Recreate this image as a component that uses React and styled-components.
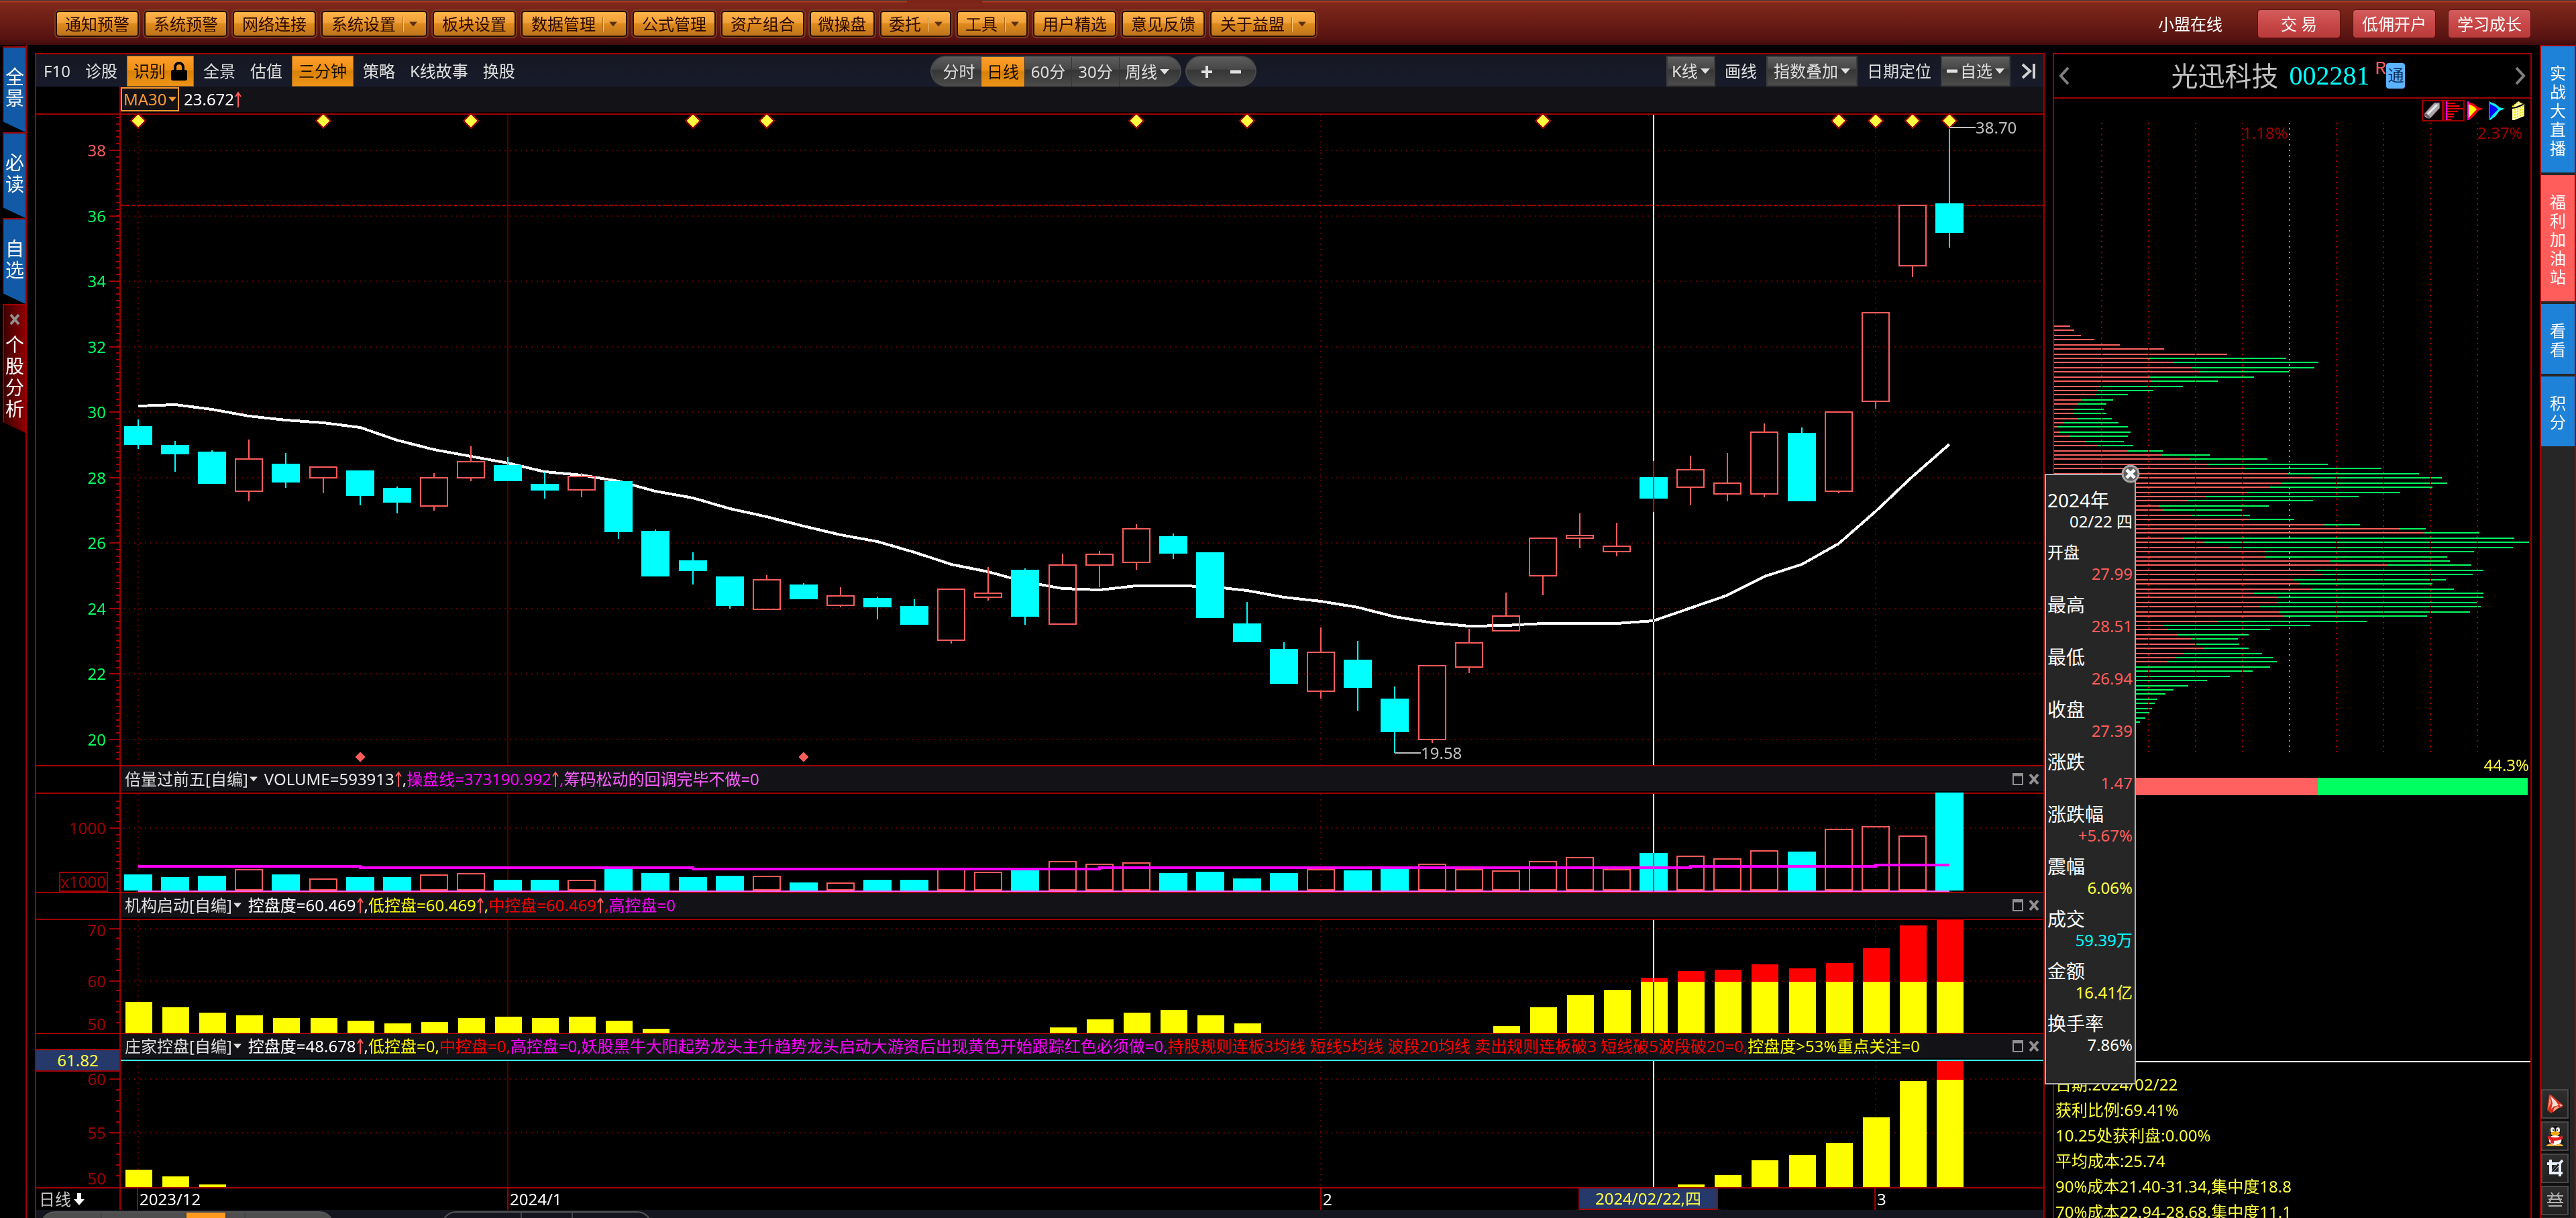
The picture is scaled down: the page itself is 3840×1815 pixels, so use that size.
import { Fragment, useState } from "react";
import styled, { createGlobalStyle } from "styled-components";

const GlobalStyle = createGlobalStyle`
  * {
    box-sizing: border-box;
  }
  body {
    margin: 0;
    background: #000;
    color: #e0e0e0;
    font-family: "Noto Sans", "Noto Sans CJK SC", sans-serif;
    font-size: 24px;
    line-height: 30px;
    overflow: hidden;
  }
  button, select {
    margin: 0;
    padding: 0;
    border: 0;
    background: none;
    color: inherit;
    font: inherit;
    white-space: nowrap;
    cursor: pointer;
  }
  svg {
    display: block;
    flex: none;
  }
`;

const LINE = "#a00000";
const GRID = "#600000";
const UP = "#ff5c5c";
const CYAN = "#00ffff";
const YELLOW = "#ffff40";

const Page = styled.div`
  display: flex;
  flex-direction: column;
  height: 100vh;
`;

/* ---------- top bar ---------- */

const TopBar = styled.header`
  position: relative;
  display: flex;
  flex: none;
  align-items: center;
  justify-content: space-between;
  height: 67px;
  padding: 3px 67px 0 83px;
  border-top: 1px solid #3a3a3a;
  background: linear-gradient(#a8381f 0 2px, #80271b 3px, #6a1d15 50%, #551111 88%, #3e0d0d);
`;

const ActiveNotch = styled.div`
  position: absolute;
  top: -1px;
  left: 1352px;
  width: 112px;
  height: 5px;
  background: #7c2418;
`;

const MenuList = styled.nav`
  display: flex;
  gap: 8px;
`;

const MenuButton = styled.button`
  display: flex;
  align-items: center;
  justify-content: center;
  gap: 10px;
  width: ${(props) => props.$width}px;
  height: 39px;
  border: 2px solid #2a0f04;
  border-radius: 5px;
  background: linear-gradient(#ffb347, #f0a03a 45%, #df8a1c 50%, #bd741c);
  box-shadow: 0 0 0 2px #7c3a20;
  color: #2a0800;
`;

const MenuDivider = styled.i`
  width: 2px;
  height: 22px;
  margin-right: -2px;
  background: #ffc873;
  border-left: 1px solid #b06a1a;
`;

const Account = styled.div`
  display: flex;
  align-items: center;
  gap: 18px;
  color: #fff;
`;

const OnlineLink = styled.a`
  margin-right: 34px;
  color: #fff;
  text-decoration: none;
`;

const RedButton = styled.button`
  width: 124px;
  height: 43px;
  border: 1px solid #5a1212;
  border-radius: 5px;
  background: linear-gradient(#d45c5c, #c84848 50%, #b83a3a);
  white-space: pre;
`;

/* ---------- side rails ---------- */

const Body = styled.div`
  display: flex;
  flex: 1;
  gap: 12px;
  min-height: 0;
`;

const LeftRail = styled.nav`
  flex: none;
  width: 40px;
  padding: 2px 0 0 4px;
  border-right: 2px solid ${LINE};
`;

const LeftTab = styled.button`
  display: flex;
  flex-direction: column;
  align-items: center;
  justify-content: center;
  width: 34px;
  height: ${(props) => (props.$active ? 192 : 128)}px;
  padding-bottom: 8px;
  border: 2px solid ${LINE};
  border-right: 0;
  border-bottom: 0;
  background: ${(props) =>
    props.$active ? "linear-gradient(90deg, #400000, #8c0000)" : "#125aa5"};
  clip-path: polygon(0 0, 100% 0, 100% 100%, 0 calc(100% - 16px));
  color: #fff;
  font-size: 28px;
  line-height: 32px;
`;

const TabClose = styled.svg`
  margin-bottom: 12px;
`;

const RightRail = styled.nav`
  display: flex;
  flex: none;
  flex-direction: column;
  gap: 4px;
  width: 54px;
  border: 2px solid ${LINE};
  border-bottom: 0;
  background: #262626;
`;

const RightTab = styled.button`
  display: flex;
  flex: none;
  flex-direction: column;
  align-items: center;
  justify-content: center;
  height: ${(props) => (props.$tall ? 188 : 104)}px;
  padding-top: 4px;
  background: ${(props) => (props.$hot ? UP : "#1e82d8")};
  color: #fff;
  line-height: 28px;
`;

const RailTools = styled.div`
  display: flex;
  flex-direction: column;
  gap: 4px;
  height: 192px;
  margin-top: auto;
  overflow: hidden;
`;

const RailTool = styled.button`
  display: flex;
  flex: none;
  align-items: center;
  justify-content: center;
  width: 41px;
  height: 44px;
  border: 2px solid #484848;
  background: linear-gradient(#2e2e2e, #202020);
  box-shadow: 0 0 0 2px #101010;
`;

/* ---------- chart panel ---------- */

const ChartPanel = styled.main`
  display: flex;
  flex: 1;
  flex-direction: column;
  min-width: 0;
  border: 2px solid ${LINE};
  border-bottom: 0;
  margin-top: 12px;
`;

const Toolbar = styled.div`
  display: grid;
  grid-template-columns: 1333px 1fr auto;
  flex: none;
  height: 48px;
  padding-top: 2px;
  background: linear-gradient(#161822, #181b2b);
`;

const ToolGroup = styled.div`
  display: flex;
  align-items: stretch;
  gap: ${(props) => props.$gap || 0}px;
`;

const ToolButton = styled.button`
  display: flex;
  align-items: center;
  gap: 8px;
  padding: 0 11px;
  ${(props) =>
    props.$active &&
    `
    margin: 0 3px;
    padding: 0 9px;
    border: 1px solid #9a6a2a;
    background: linear-gradient(#ff9e2c, #f09014 45%, #d88108 50%, #ef9418);
    color: #140a00;
  `}
`;

const Pill = styled.div`
  display: flex;
  margin-right: 6px;
  padding: 0 8px;
  border: 2px solid #4a4a4a;
  border-bottom: 0;
  border-radius: 26px;
  background: linear-gradient(#5c5c5c, #484848 40%, #363636 45%, #4c4c4c);
  overflow: hidden;
`;

const PillButton = styled.button`
  display: flex;
  align-items: center;
  justify-content: center;
  width: ${(props) => props.$width}px;
  border-right: ${(props) => (props.$plain ? 0 : 1)}px solid #363636;
  ${(props) =>
    props.$active &&
    `
    background: linear-gradient(#ff9e2c, #f09014 45%, #d88108 50%, #ef9418);
    color: #140a00;
  `}
`;

const PickLabel = styled.label`
  display: flex;
  align-items: center;
  gap: 4px;
  padding: 0 ${(props) => props.$pad || 6}px;
  ${(props) =>
    props.$boxed &&
    `
    border: 2px solid #3c3c3c;
    background: linear-gradient(#5c5c5c, #484848 40%, #363636 45%, #4c4c4c);
  `}
  select {
    appearance: none;
  }
`;

const IndicatorRow = styled.div`
  display: grid;
  grid-template-columns: 126px 1fr;
  flex: none;
  height: ${(props) => props.$height}px;
  border-bottom: 2px solid ${(props) => props.$line || LINE};
`;

const AxisCell = styled.div`
  border-right: 2px solid ${LINE};
`;

const IndicatorBar = styled.div`
  display: flex;
  align-items: center;
  margin-bottom: 2px;
  padding-left: ${(props) => (props.$flush ? 0 : 6)}px;
  background: #121217;
  white-space: nowrap;
`;

const MaLabel = styled(PickLabel)`
  height: 36px;
  margin-right: 7px;
  border: 2px solid #ff9a2e;
  color: #ff9a2e;
  gap: 2px;
  padding: 0 2px;
`;

const NameButton = styled.button`
  display: flex;
  align-items: center;
  gap: 2px;
  margin-right: 10px;
`;

const Reading = styled.span`
  display: flex;
  align-items: center;
  color: ${(props) => props.$color};
  white-space: pre;
`;

const WindowButtons = styled.div`
  display: flex;
  gap: 8px;
  margin-left: auto;
  padding-right: 6px;
`;

const Pane = styled.section`
  position: relative;
  flex: none;
  border-bottom: 2px solid ${LINE};
  svg {
    width: 100%;
    overflow: visible;
  }
`;

const LevelTag = styled.div`
  position: absolute;
  top: -18px;
  left: 0;
  width: 126px;
  height: 34px;
  border: 2px solid ${LINE};
  border-left: 0;
  background: #25396a;
  color: ${YELLOW};
  text-align: center;
`;

const DateRow = styled.div`
  position: relative;
  display: grid;
  grid-template-columns: 126px 26px 552px 1212px 826px 1fr;
  flex: none;
  height: 32px;
  color: #fff;
`;

const DateCell = styled.div`
  display: flex;
  align-items: center;
  padding-left: 2px;
  border-right: ${(props) => (props.$last ? 0 : 2)}px solid ${LINE};
`;

const PeriodButton = styled.button`
  display: flex;
  align-items: center;
  padding-left: 4px;
  border-right: 2px solid ${LINE};
  color: #c8c8c8;
`;

const DateTag = styled.div`
  position: absolute;
  top: 0;
  left: 2299px;
  width: 208px;
  height: 32px;
  border: 2px solid ${LINE};
  border-top: 0;
  background: #25396a;
  color: ${YELLOW};
  text-align: center;
`;

const BottomStrip = styled.div`
  display: flex;
  flex: 1;
  align-items: flex-start;
  gap: 160px;
  min-height: 0;
  padding: 2px 6px 0;
  background: #15151f;
  overflow: hidden;
`;

const StripPill = styled.div`
  display: grid;
  grid-template-columns: ${(props) => props.$columns};
  flex: none;
  height: 44px;
  border: 2px solid #565656;
  border-radius: 24px;
  background: ${(props) => (props.$filled ? "#4e4e4e" : "none")};
  overflow: hidden;
`;

const StripCell = styled.i`
  border-right: 2px solid #444;
  background: ${(props) => (props.$active ? "#ff9a1e" : "none")};
`;

/* ---------- stock panel ---------- */

const StockPanel = styled.aside`
  position: relative;
  flex: none;
  width: 714px;
  margin-top: 12px;
  border: 2px solid ${LINE};
  border-bottom: 0;
`;

const StockHeader = styled.div`
  display: flex;
  align-items: center;
  justify-content: space-between;
  height: 66px;
  padding: 0 5px;
  border-bottom: 2px solid ${LINE};
`;

const StockTitle = styled.h1`
  display: flex;
  align-items: center;
  margin: 0 12px 0 0;
  color: #c0c0c0;
  font-size: 40px;
  font-weight: 400;
  line-height: 50px;
`;

const StockCode = styled.span`
  margin: 0 8px 0 16px;
  color: ${CYAN};
  font-family: "Liberation Serif", serif;
`;

const MarginMark = styled.sup`
  align-self: flex-start;
  color: ${UP};
  font-family: "Liberation Mono", monospace;
  font-size: 28px;
  line-height: 30px;
`;

const ConnectBadge = styled.span`
  height: 38px;
  padding: 0 2px;
  border-radius: 4px;
  background: #5cb3ff;
  color: #0a2a50;
  font-size: 24px;
  line-height: 36px;
`;

const ProfileTools = styled.div`
  display: flex;
  justify-content: flex-end;
  height: 36px;
  padding: 2px 2px 0 0;
`;

const ProfileTool = styled.button`
  display: flex;
  align-items: center;
  justify-content: center;
  width: 32px;
  height: 32px;
  border: 2px solid ${(props) => (props.$boxed ? LINE : "transparent")};
`;

const ProfileChart = styled.svg`
  width: 100%;
`;

const RatioText = styled.div`
  height: 38px;
  padding-right: 2px;
  color: ${YELLOW};
  line-height: 38px;
  text-align: right;
`;

const RatioBar = styled.div`
  height: 26px;
  margin-right: 4px;
  background: #00ff60;
`;

const RatioFill = styled.div`
  height: 100%;
  background: #ff6060;
`;

const CostList = styled.ul`
  margin: 396px 0 0;
  padding: 14px 0 0 2px;
  border-top: 2px solid #fff;
  color: ${YELLOW};
  line-height: 38px;
  list-style: none;
`;

const Popup = styled.section`
  position: absolute;
  top: 625px;
  left: -14px;
  width: 136px;
  height: 910px;
  padding: 20px 3px 0 2px;
  border: 2px solid #b0b0b0;
  background: #262626;
  color: #fff;
`;

const PopupClose = styled.button`
  position: absolute;
  top: -16px;
  right: -8px;
`;

const Quote = styled.dl`
  margin: 0 0 14px;
`;

const QuoteLabel = styled.dt`
  font-size: ${(props) => (props.$small ? 24 : 28)}px;
  line-height: 34px;
`;

const QuoteValue = styled.dd`
  margin: 0;
  color: ${(props) => props.$color};
  line-height: 30px;
  text-align: right;
  white-space: nowrap;
`;

/* ---------- data ---------- */

const menus = [
  ["通知预警", 124],
  ["系统预警", 124],
  ["网络连接", 124],
  ["系统设置", 158, true],
  ["板块设置", 124],
  ["数据管理", 158, true],
  ["公式管理", 124],
  ["资产组合", 124],
  ["微操盘", 97],
  ["委托", 106, true],
  ["工具", 106, true],
  ["用户精选", 124],
  ["意见反馈", 124],
  ["关于益盟", 158, true],
];

// [down, high, top, bottom, low], y in page pixels
const candles = [
  [1, 625, 635, 663, 669], [1, 657, 663, 677, 703], [1, 671, 673, 721, 721],
  [0, 655, 683, 733, 747], [1, 675, 691, 719, 727], [0, 695, 695, 713, 735],
  [1, 701, 701, 739, 753], [1, 725, 727, 749, 765], [0, 705, 711, 755, 761],
  [0, 665, 687, 713, 717], [1, 681, 693, 717, 717], [1, 703, 721, 731, 743],
  [0, 705, 709, 731, 741], [1, 717, 717, 793, 803], [1, 789, 791, 859, 859],
  [1, 823, 835, 851, 871], [1, 859, 859, 903, 907], [0, 857, 863, 909, 909],
  [1, 869, 871, 893, 893], [0, 875, 887, 903, 905], [1, 889, 891, 905, 923],
  [1, 893, 903, 931, 931], [0, 877, 877, 955, 959], [0, 845, 883, 891, 895],
  [1, 847, 849, 919, 931], [0, 825, 841, 931, 931], [0, 821, 825, 843, 875],
  [0, 781, 787, 839, 849], [1, 795, 799, 825, 833], [1, 823, 823, 921, 921],
  [1, 897, 929, 957, 957], [1, 957, 967, 1019, 1019], [0, 935, 971, 1031, 1041],
  [1, 955, 983, 1025, 1059], [1, 1023, 1041, 1091, 1122], [0, 991, 991, 1103, 1107],
  [0, 937, 957, 995, 1003], [0, 883, 917, 941, 941], [0, 801, 801, 859, 887],
  [0, 765, 797, 803, 817], [0, 779, 813, 823, 829], [1, 687, 711, 743, 763],
  [0, 679, 699, 727, 753], [0, 675, 719, 737, 747], [0, 631, 643, 737, 741],
  [1, 637, 645, 747, 747], [0, 613, 613, 733, 735], [0, 465, 465, 599, 609],
  [0, 305, 305, 397, 413], [1, 190, 303, 347, 369],
];

const ma30 = [
  605, 603, 610, 620, 626, 630, 637, 656, 670, 680, 690, 703, 708, 717, 732, 742, 758,
  770, 784, 797, 807, 823, 841, 852, 867, 877, 879, 873, 873, 874, 880, 890, 896, 905,
  919, 928, 933, 932, 929, 929, 929, 925, 906, 887, 859, 841, 810, 762, 710, 662,
];

const volumes = [
  1303, 1307, 1305, 1295, 1303, 1309, 1307, 1307, 1303, 1301, 1311, 1311, 1311, 1295,
  1301, 1307, 1305, 1305, 1315, 1315, 1311, 1311, 1295, 1299, 1297, 1283, 1287, 1285,
  1301, 1299, 1309, 1301, 1295, 1297, 1295, 1287, 1295, 1297, 1283, 1277, 1295, 1271,
  1275, 1279, 1267, 1269, 1235, 1231, 1245, 1181,
];

const volumeLine = [
  [0, 1291], [6, 1291], [6, 1293], [15, 1293], [15, 1295], [26, 1295],
  [26, 1293], [42, 1293], [42, 1291], [47, 1291], [47, 1289], [49, 1289],
];

const control = {
  0: 1493, 1: 1501, 2: 1509, 3: 1513, 4: 1517, 5: 1517, 6: 1521, 7: 1525, 8: 1523,
  9: 1517, 10: 1515, 11: 1517, 12: 1515, 13: 1521, 14: 1533, 25: 1531, 26: 1519,
  27: 1509, 28: 1505, 29: 1513, 30: 1525, 37: 1529, 38: 1501, 39: 1483, 40: 1475,
  41: 1457, 42: 1447, 43: 1445, 44: 1437, 45: 1443, 46: 1435, 47: 1413, 48: 1379,
  49: 1371,
};

const banker = {
  0: 1743, 1: 1753, 2: 1765, 42: 1765, 43: 1751, 44: 1729, 45: 1721, 46: 1703,
  47: 1665, 48: 1611, 49: 1581,
};

// chip distribution, [profit length, total length] from the highest price down
const chips = [
  [24, 24], [30, 30], [40, 40], [60, 60], [98, 98], [164, 164], [258, 258],
  [141, 346], [178, 394], [206, 388], [216, 350], [142, 298], [145, 244], [67, 192],
  [64, 148], [62, 110], [41, 88], [36, 78], [30, 74], [28, 78], [34, 86], [14, 96],
  [4, 110], [8, 114], [22, 110], [46, 104], [64, 118], [110, 162], [160, 232],
  [202, 318], [230, 408], [284, 488], [348, 544], [385, 578], [340, 586], [322, 564],
  [288, 516], [226, 454], [198, 386], [156, 320], [162, 280], [206, 292], [292, 358],
  [403, 456], [514, 554], [552, 634], [192, 686], [224, 708], [262, 684], [314, 626],
  [314, 586], [412, 590], [498, 622], [388, 640], [400, 624], [358, 584], [366, 564],
  [385, 596], [298, 640], [334, 640], [332, 630], [306, 636], [336, 620], [342, 556],
  [244, 466], [163, 382], [168, 322], [184, 290], [206, 274], [210, 276], [222, 290],
  [192, 310], [182, 326], [168, 332], [0, 322], [0, 296], [0, 262], [0, 228], [0, 200],
  [0, 178], [0, 166], [0, 154], [0, 150], [0, 146], [0, 142], [0, 136], [0, 128],
];

const costs = [
  "日期:2024/02/22",
  "获利比例:69.41%",
  "10.25处获利盘:0.00%",
  "平均成本:25.74",
  "90%成本21.40-31.34,集中度18.8",
  "70%成本22.94-28.68,集中度11.1",
];

const quotes = [
  ["2024年", "02/22 四", "#fff"],
  ["开盘", "27.99", UP],
  ["最高", "28.51", UP],
  ["最低", "26.94", UP],
  ["收盘", "27.39", UP],
  ["涨跌", "1.47", UP],
  ["涨跌幅", "+5.67%", UP],
  ["震幅", "6.06%", YELLOW],
  ["成交", "59.39万", CYAN],
  ["金额", "16.41亿", YELLOW],
  ["换手率", "7.86%", "#fff"],
];

const yellowMarks = [0, 5, 9, 15, 17, 27, 30, 38, 46, 47, 48, 49];
const MAGENTA = "#ff00ff";

const barX = (i) => Math.round(152 + i * 55.1);

/* ---------- small drawings ---------- */

const Caret = ({ size = 14, color = "#e0e0e0" }) => (
  <svg width={size} height={size} viewBox="0 0 14 14">
    <path d="M0 3h14l-7 8z" fill={color} />
  </svg>
);

const RiseArrow = () => (
  <svg width="12" height="26" viewBox="0 0 12 26">
    <path d="M6 25V3M2 9l4-6 4 6" fill="none" stroke={UP} strokeWidth="2" />
  </svg>
);

const CloseMark = ({ color = "#909090" }) => (
  <svg width="16" height="18" viewBox="0 0 16 18">
    <path d="M2 2l12 14M14 2L2 16" stroke={color} strokeWidth="4" />
  </svg>
);

const Dash = ({ width = 16 }) => (
  <svg width={width} height="18" viewBox="0 0 16 18">
    <path d="M0 9h16" stroke="#e0e0e0" strokeWidth="5" />
  </svg>
);

const Lock = () => (
  <svg width="24" height="28" viewBox="0 0 24 28">
    <path d="M6 14V8a6 6 0 0 1 12 0v6" fill="none" stroke="#000" strokeWidth="4" />
    <rect y="12" width="24" height="16" rx="3" fill="#000" />
  </svg>
);

const Diamond = ({ x, y, r, fill, stroke }) => (
  <path
    d={`M${x} ${y - r}l${r} ${r}l${-r} ${r}l${-r} ${-r}z`}
    fill={fill}
    stroke={stroke}
    strokeWidth="2"
  />
);

function Dropdown({ name, text, icon, ...rest }) {
  return (
    <PickLabel {...rest}>
      {icon}
      <select aria-label={name}>
        <option>{text}</option>
      </select>
      <Caret />
    </PickLabel>
  );
}

/* ---------- panes ---------- */

function PlotFrame({ top, height, rows, minor, children }) {
  const bottom = top + height;
  return (
    <svg height={height} shapeRendering="crispEdges" fontSize="24">
      <g transform={`translate(0 ${-top})`}>
        {rows.map((row) => (
          <Fragment key={row.text}>
            {row.grid !== false && (
              <>
                <line x1="109" x2="124" y1={row.y} y2={row.y} stroke={LINE} strokeWidth="2" />
                <line
                  x1="130"
                  x2="100%"
                  y1={row.y}
                  y2={row.y}
                  stroke={GRID}
                  strokeWidth="2"
                  strokeDasharray="2 6"
                />
              </>
            )}
            <text x="104" y={(row.labelY || row.y) + 9} textAnchor="end" fill={row.color || LINE}>
              {row.text}
            </text>
          </Fragment>
        ))}
        {minor.map((y) => (
          <line key={y} x1="119" x2="124" y1={y} y2={y} stroke={LINE} strokeWidth="2" />
        ))}
        <line x1="125" x2="125" y1={top} y2={bottom} stroke={LINE} strokeWidth="2" />
        {[0, 32, 47].map((i) => (
          <line
            key={i}
            x1={barX(i)}
            x2={barX(i)}
            y1={top}
            y2={bottom}
            stroke={GRID}
            strokeWidth="2"
            strokeDasharray="2 6"
          />
        ))}
        <line x1={barX(10)} x2={barX(10)} y1={top} y2={bottom} stroke="#500000" strokeWidth="2" />
        {children}
        <line
          x1={barX(41)}
          x2={barX(41)}
          y1={top}
          y2={bottom}
          stroke="#fff"
          strokeWidth="2"
          style={{ mixBlendMode: "difference" }}
        />
      </g>
    </svg>
  );
}

const steps = (from, to, step) => {
  const list = [];
  for (let y = from; y < to; y += step) {
    list.push(Math.round(y));
  }
  return list;
};

function PricePane() {
  const rows = [38, 36, 34, 32, 30, 28, 26, 24, 22, 20].map((price) => ({
    text: String(price),
    y: Math.round(1102 - (price - 20) * 48.78),
    color: price === 38 ? UP : "#00ff60",
  }));
  return (
    <Pane>
      <PlotFrame top={171} height={969} rows={rows} minor={steps(175, 1140, 9.756)}>
        <line
          x1="126"
          x2="100%"
          y1="306"
          y2="306"
          stroke={LINE}
          strokeWidth="2"
          strokeDasharray="6 2"
        />
        <polyline
          points={ma30.map((y, i) => `${barX(i)},${y}`).join(" ")}
          fill="none"
          stroke="#fff"
          strokeWidth="4"
        />
        {candles.map(([down, high, top, bottom, low], i) => {
          const x = barX(i);
          const color = down ? CYAN : UP;
          return (
            <g key={i} stroke={color} strokeWidth="2">
              {high < top && <line x1={x} x2={x} y1={high} y2={top} />}
              {low > bottom && <line x1={x} x2={x} y1={bottom} y2={low} />}
              <rect
                x={x - 20}
                y={top + 1}
                width="40"
                height={bottom - top - 2}
                fill={down ? color : "none"}
              />
            </g>
          );
        })}
        {yellowMarks.map((i) => (
          <Diamond key={i} x={barX(i)} y={180} r={11} fill={YELLOW} stroke={LINE} />
        ))}
        {[6, 18].map((i) => (
          <Diamond key={i} x={barX(i)} y={1128} r={6} fill={UP} stroke={UP} />
        ))}
        <g stroke="#c0c0c0" strokeWidth="2">
          <line x1={barX(49)} x2={barX(49) + 39} y1="190" y2="190" />
          <line x1={barX(34)} x2={barX(34) + 39} y1="1122" y2="1122" />
        </g>
        <text x={barX(49) + 39} y="199" fill="#c0c0c0">
          38.70
        </text>
        <text x={barX(34) + 39} y="1131" fill="#c0c0c0">
          19.58
        </text>
      </PlotFrame>
    </Pane>
  );
}

function VolumePane() {
  return (
    <Pane>
      <PlotFrame
        top={1183}
        height={146}
        rows={[
          { text: "1000", y: 1234 },
          { text: "x1000", y: 1314, grid: false },
        ]}
        minor={steps(1194, 1325, 10)}
      >
        <rect x="35" y="1300" width="71" height="28" fill="none" stroke={LINE} strokeWidth="2" />
        {volumes.map((top, i) => (
          <rect
            key={i}
            x={barX(i) - 20}
            y={top + 1}
            width="40"
            height={1325 - top}
            fill={candles[i][0] ? CYAN : "none"}
            stroke={candles[i][0] ? CYAN : UP}
            strokeWidth="2"
          />
        ))}
        <line x1={barX(0)} x2={barX(49)} y1="1328" y2="1328" stroke="#ff60ff" strokeWidth="2" />
        <polyline
          points={volumeLine.map(([i, y]) => `${barX(i)},${y}`).join(" ")}
          fill="none"
          stroke={MAGENTA}
          strokeWidth="4"
        />
      </PlotFrame>
    </Pane>
  );
}

function ControlPane({ top, height, rows, minor, bars, split, children }) {
  const bottom = top + height;
  return (
    <Pane>
      <PlotFrame top={top} height={height} rows={rows} minor={minor}>
        {Object.entries(bars).map(([i, y]) => (
          <Fragment key={i}>
            {y < split && (
              <rect x={barX(+i) - 19} y={y} width="40" height={split - y} fill="#ff0000" />
            )}
            <rect
              x={barX(+i) - 19}
              y={Math.max(y, split)}
              width="40"
              height={bottom - Math.max(y, split)}
              fill="#ffff00"
            />
          </Fragment>
        ))}
      </PlotFrame>
      {children}
    </Pane>
  );
}

function IndicatorHeader({ height, name, readings, line }) {
  return (
    <IndicatorRow $height={height} $line={line}>
      <AxisCell />
      <IndicatorBar>
        <NameButton>
          {name}
          <Caret size={12} />
        </NameButton>
        {readings.map(([text, color, rise], i) => (
          <Reading key={text} $color={color}>
            {text}
            {rise && <RiseArrow />}
            {i < readings.length - 1 && ","}
          </Reading>
        ))}
        <WindowButtons>
          <button aria-label="最大化">
            <svg width="16" height="18" viewBox="0 0 16 18">
              <path d="M1 1h14v16H1z" fill="none" stroke="#909090" strokeWidth="2" />
              <path d="M0 3h16" stroke="#909090" strokeWidth="3" />
            </svg>
          </button>
          <button aria-label="关闭">
            <CloseMark />
          </button>
        </WindowButtons>
      </IndicatorBar>
    </IndicatorRow>
  );
}

function Chart() {
  const [period, setPeriod] = useState("日线");
  const periods = [
    ["分时", 66],
    ["日线", 65],
    ["60分", 70],
    ["30分", 71],
  ];
  return (
    <ChartPanel>
      <Toolbar>
        <ToolGroup>
          <ToolButton>F10</ToolButton>
          <ToolButton>诊股</ToolButton>
          <ToolButton $active>
            识别
            <Lock />
          </ToolButton>
          <ToolButton>全景</ToolButton>
          <ToolButton>估值</ToolButton>
          <ToolButton $active>三分钟</ToolButton>
          <ToolButton>策略</ToolButton>
          <ToolButton>K线故事</ToolButton>
          <ToolButton>换股</ToolButton>
        </ToolGroup>
        <ToolGroup>
          <Pill>
            {periods.map(([text, width]) => (
              <PillButton
                key={text}
                $width={width}
                $active={period === text}
                onClick={() => setPeriod(text)}
              >
                {text}
              </PillButton>
            ))}
            <Dropdown name="更多周期" text="周线" $pad={8} />
          </Pill>
          <Pill>
            <PillButton $width={43} $plain aria-label="放大">
              <svg width="16" height="18" viewBox="0 0 16 18">
                <path d="M8 0v18M0 9h16" stroke="#e0e0e0" strokeWidth="4" />
              </svg>
            </PillButton>
            <PillButton $width={43} $plain aria-label="缩小">
              <Dash />
            </PillButton>
          </Pill>
        </ToolGroup>
        <ToolGroup $gap={3}>
          <Dropdown name="K线类型" text="K线" $boxed $pad={6} />
          <ToolButton>画线</ToolButton>
          <Dropdown name="指数叠加" text="指数叠加" $boxed $pad={9} />
          <ToolButton>日期定位</ToolButton>
          <Dropdown name="自选" text="自选" icon={<Dash />} $boxed $pad={7} />
          <ToolButton aria-label="收起">
            <svg width="24" height="24" viewBox="0 0 24 24">
              <path d="M4 2l11 10L4 22M21 1v22" fill="none" stroke="#d0d0d0" strokeWidth="4" />
            </svg>
          </ToolButton>
        </ToolGroup>
      </Toolbar>

      <IndicatorRow $height={42}>
        <AxisCell />
        <IndicatorBar $flush>
          <MaLabel>
            <select aria-label="均线">
              <option>MA30</option>
            </select>
            <Caret size={12} color="#ff9a2e" />
          </MaLabel>
          <Reading $color="#fff">
            23.672
            <RiseArrow />
          </Reading>
        </IndicatorBar>
      </IndicatorRow>
      <PricePane />

      <IndicatorHeader
        height={41}
        name="倍量过前五[自编]"
        readings={[
          ["VOLUME=593913", "#e8e8e8", true],
          ["操盘线=373190.992", MAGENTA, true],
          ["筹码松动的回调完毕不做=0", "#ff60ff"],
        ]}
      />
      <VolumePane />

      <IndicatorHeader
        height={40}
        name="机构启动[自编]"
        readings={[
          ["控盘度=60.469", "#fff", true],
          ["低控盘=60.469", "#ffff00", true],
          ["中控盘=60.469", "#ff0000", true],
          ["高控盘=0", MAGENTA],
        ]}
      />
      <ControlPane
        top={1371}
        height={168}
        rows={[
          { text: "70", y: 1384, labelY: 1386 },
          { text: "60", y: 1462 },
          { text: "50", y: 1526, grid: false },
        ]}
        minor={[1398, 1414, 1430, 1446, 1476, 1492, 1508, 1524]}
        bars={control}
        split={1463}
      />

      <IndicatorHeader
        height={40}
        line="#40e8e8"
        name="庄家控盘[自编]"
        readings={[
          ["控盘度=48.678", "#fff", true],
          ["低控盘=0", "#ffff00"],
          ["中控盘=0", "#ff0000"],
          ["高控盘=0", MAGENTA],
          ["妖股黑牛大阳起势龙头主升趋势龙头启动大游资后出现黄色开始跟踪红色必须做=0", MAGENTA],
          ["持股规则连板3均线 短线5均线 波段20均线 卖出规则连板破3 短线破5波段破20=0", "#ff0000"],
          ["控盘度>53%重点关注=0", "#ffff00"],
        ]}
      />
      <ControlPane
        top={1581}
        height={188}
        rows={[
          { text: "60", y: 1608 },
          { text: "55", y: 1688 },
          { text: "50", y: 1756, grid: false },
        ]}
        minor={[1624, 1640, 1656, 1672, 1704, 1720, 1736, 1752]}
        bars={banker}
        split={1609}
      >
        <LevelTag>61.82</LevelTag>
      </ControlPane>

      <DateRow>
        <PeriodButton>
          日线
          <svg width="22" height="22" viewBox="0 0 22 22">
            <path d="M9 2h6v9h5l-8 9-8-9h5z" fill="#fff" />
          </svg>
        </PeriodButton>
        <DateCell />
        <DateCell>2023/12</DateCell>
        <DateCell>2024/1</DateCell>
        <DateCell>2</DateCell>
        <DateCell $last>3</DateCell>
        <DateTag>2024/02/22,四</DateTag>
      </DateRow>
      <BottomStrip>
        <StripPill $filled $columns="90px 126px 60px 28px 130px">
          <StripCell />
          <StripCell />
          <StripCell $active />
          <StripCell />
        </StripPill>
        <StripPill $columns="118px 76px 116px">
          <StripCell />
          <StripCell />
        </StripPill>
      </BottomStrip>
    </ChartPanel>
  );
}

function ChipProfile() {
  return (
    <ProfileChart height="938" shapeRendering="crispEdges" fontSize="24">
      {chips.map(([profit, total], i) => {
        const y = 303 + Math.round((i * 6.862) / 2) * 2;
        return (
          <g key={i} strokeWidth="2">
            <line x1="0" x2={profit} y1={y} y2={y} stroke="#ff6060" />
            <line x1={profit} x2={total} y1={y} y2={y} stroke="#00ff60" />
          </g>
        );
      })}
      {[71, 141, 211, 281, 351, 421, 491, 561, 631].map((x) => (
        <line
          key={x}
          x1={x}
          x2={x}
          y1="0"
          y2="938"
          stroke={x === 351 ? "#ff7070" : LINE}
          strokeWidth="2"
          strokeDasharray="2 6"
        />
      ))}
      <text x="281" y="24" fill={LINE}>
        1.18%
      </text>
      <text x="631" y="24" fill={LINE}>
        2.37%
      </text>
    </ProfileChart>
  );
}

function Stock() {
  const [open, setOpen] = useState(true);
  return (
    <StockPanel>
      <StockHeader>
        <button aria-label="上一个">
          <svg width="20" height="26" viewBox="0 0 20 26">
            <path d="M16 1L5 13l11 12" fill="none" stroke="#808080" strokeWidth="4" />
          </svg>
        </button>
        <StockTitle>
          光迅科技
          <StockCode>002281</StockCode>
          <MarginMark>R</MarginMark>
          <ConnectBadge>通</ConnectBadge>
        </StockTitle>
        <button aria-label="下一个">
          <svg width="20" height="26" viewBox="0 0 20 26">
            <path d="M4 1l11 12L4 25" fill="none" stroke="#808080" strokeWidth="4" />
          </svg>
        </button>
      </StockHeader>
      <ProfileTools>
        <ProfileTool $boxed aria-label="清除">
          <svg width="28" height="28" viewBox="0 0 28 28">
            <path d="M2 18L17 2h8v8L11 25H5l-3-3z" fill="#a8a8a8" stroke="#702060" strokeWidth="1" />
            <path d="M7 19L21 5" stroke="#e8e8e8" strokeWidth="3" />
            <path d="M3 19l7 6" stroke="#666" strokeWidth="3" />
          </svg>
        </ProfileTool>
        <ProfileTool $boxed aria-label="分布">
          <svg width="28" height="28" viewBox="0 0 28 28">
            <path d="M3 0v28" stroke={MAGENTA} strokeWidth="2" />
            <path
              d="M4 3h12M4 7h18M4 11h24M4 15h16M4 19h10M4 23h10M4 27h6"
              stroke="#f00"
              strokeWidth="2"
            />
          </svg>
        </ProfileTool>
        <ProfileTool aria-label="红色分布">
          <svg width="28" height="28" viewBox="0 0 28 28">
            <path d="M4 1l8 3 6 5 8 2-8 3-6 8-8 6z" fill="#f00" />
            <path d="M4 4l8 4 4 4-6 6-6 7z" fill="#ff0" />
            <path d="M3 0v28" stroke={MAGENTA} strokeWidth="2" />
          </svg>
        </ProfileTool>
        <ProfileTool aria-label="蓝色分布">
          <svg width="28" height="28" viewBox="0 0 28 28">
            <path d="M4 1l8 3 6 5 8 2-8 3-6 8-8 6z" fill="#0ff" />
            <path d="M4 4l8 4 4 4-6 6-6 7z" fill="#00f" />
            <path d="M3 0v28" stroke={MAGENTA} strokeWidth="2" />
          </svg>
        </ProfileTool>
        <ProfileTool aria-label="说明">
          <svg width="20" height="28" viewBox="0 0 20 28">
            <path d="M1 8L10 0l9 5v17L4 28H1z" fill="#fff8b0" />
            <path d="M1 10l6-1 12-5" fill="none" stroke="#000" strokeWidth="2" />
            <path
              d="M5 11v16M9 10v16M13 8v16M17 7v15M1 8l9-7 9 4"
              stroke="#e8e000"
              strokeWidth="2"
              strokeDasharray="2 2"
              fill="none"
            />
          </svg>
        </ProfileTool>
      </ProfileTools>
      <ChipProfile />
      <RatioText>44.3%</RatioText>
      <RatioBar>
        <RatioFill style={{ width: `${100 - 44.3}%` }} />
      </RatioBar>
      <CostList>
        {costs.map((text) => (
          <li key={text}>{text}</li>
        ))}
      </CostList>
      {open ? (
        <Popup>
          <PopupClose aria-label="关闭" onClick={() => setOpen(false)}>
            <svg width="28" height="28" viewBox="0 0 28 28">
              <circle cx="14" cy="14" r="12" fill="#606060" stroke="#a8a8a8" strokeWidth="3" />
              <path d="M8 8l12 12M20 8L8 20" stroke="#fff" strokeWidth="5" />
            </svg>
          </PopupClose>
          {quotes.map(([label, value, color], i) => (
            <Quote key={label}>
              <QuoteLabel $small={i === 1}>{label}</QuoteLabel>
              <QuoteValue $color={color}>{value}</QuoteValue>
            </Quote>
          ))}
        </Popup>
      ) : null}
    </StockPanel>
  );
}

const stacked = (text) => [...text].map((char, i) => <span key={i}>{char}</span>);

function App() {
  return (
    <Page>
      <GlobalStyle />
      <TopBar>
        <ActiveNotch />
        <MenuList>
          {menus.map(([text, width, split]) => (
            <MenuButton key={text} $width={width}>
              {text}
              {split && (
                <>
                  <MenuDivider />
                  <Caret size={12} color="#5a3010" />
                </>
              )}
            </MenuButton>
          ))}
        </MenuList>
        <Account>
          <OnlineLink href="#online">小盟在线</OnlineLink>
          <RedButton>交 易</RedButton>
          <RedButton>低佣开户</RedButton>
          <RedButton>学习成长</RedButton>
        </Account>
      </TopBar>
      <Body>
        <LeftRail>
          <LeftTab>{stacked("全景")}</LeftTab>
          <LeftTab>{stacked("必读")}</LeftTab>
          <LeftTab>{stacked("自选")}</LeftTab>
          <LeftTab $active>
            <TabClose width="16" height="18" viewBox="0 0 16 18">
              <path d="M2 2l12 14M14 2L2 16" stroke="#909090" strokeWidth="4" />
            </TabClose>
            {stacked("个股分析")}
          </LeftTab>
        </LeftRail>
        <Chart />
        <Stock />
        <RightRail>
          <RightTab $tall>{stacked("实战大直播")}</RightTab>
          <RightTab $tall $hot>
            {stacked("福利加油站")}
          </RightTab>
          <RightTab>{stacked("看看")}</RightTab>
          <RightTab>{stacked("积分")}</RightTab>
          <RailTools>
            <RailTool aria-label="画笔">
              <svg width="28" height="32" viewBox="0 0 28 32">
                <path d="M5 2c3 0 6 2 8 5l13 11-2 3-7 2-9 7-6-5z" fill="#d8301a" />
                <path d="M6 3l2 12-5 9z" fill="#ff8a6c" />
                <path d="M7 4l8 8 4 6-8 2-3 4 2-9z" fill="#fff" opacity="0.85" />
                <path d="M12 22l5-3 3 2-9 7z" fill="#ff9a80" />
                <path d="M20 16l5 2-3 2z" fill="#ffd0c0" />
              </svg>
            </RailTool>
            <RailTool aria-label="QQ客服">
              <svg width="28" height="34" viewBox="0 0 28 34">
                <path d="M4 20l-3 8 5-2zM24 20l3 8-5-2z" fill="#111" />
                <ellipse cx="14" cy="11" rx="9" ry="10" fill="#111" stroke="#444" />
                <ellipse cx="14" cy="23" rx="10" ry="8" fill="#fff" stroke="#111" />
                <ellipse cx="10" cy="8" rx="3" ry="4" fill="#fff" />
                <ellipse cx="18" cy="8" rx="3" ry="4" fill="#fff" />
                <circle cx="11" cy="8" r="1" fill="#000" />
                <circle cx="17" cy="8" r="1" fill="#000" />
                <ellipse cx="14" cy="13" rx="7" ry="3" fill="#f5a800" />
                <path d="M3 16c6 4 16 4 22 0v5c-4 2-8 3-13 3v4H7v-5l-4-2z" fill="#e02020" />
                <path d="M1 32c0-4 9-4 12-1 3-3 13-3 13 1z" fill="#f5b040" />
              </svg>
            </RailTool>
            <RailTool aria-label="截图">
              <svg width="28" height="28" viewBox="0 0 28 28">
                <path
                  d="M7 1v20h18M2 7h19v19M25 2l-15 16"
                  fill="none"
                  stroke="#e8f0ff"
                  strokeWidth="4"
                />
                <path d="M10 18l9-10" stroke="#202020" strokeWidth="3" />
              </svg>
            </RailTool>
            <RailTool aria-label="更多">
              <svg width="26" height="26" viewBox="0 0 26 26">
                <path
                  d="M7 1l3 4M19 1l-3 4M1 6h24M3 11h20M1 16h24M3 21h20M9 6l-5 10M17 6l5 10"
                  fill="none"
                  stroke="#b0b0b0"
                  strokeWidth="2"
                />
              </svg>
            </RailTool>
          </RailTools>
        </RightRail>
      </Body>
    </Page>
  );
}

export default App;
